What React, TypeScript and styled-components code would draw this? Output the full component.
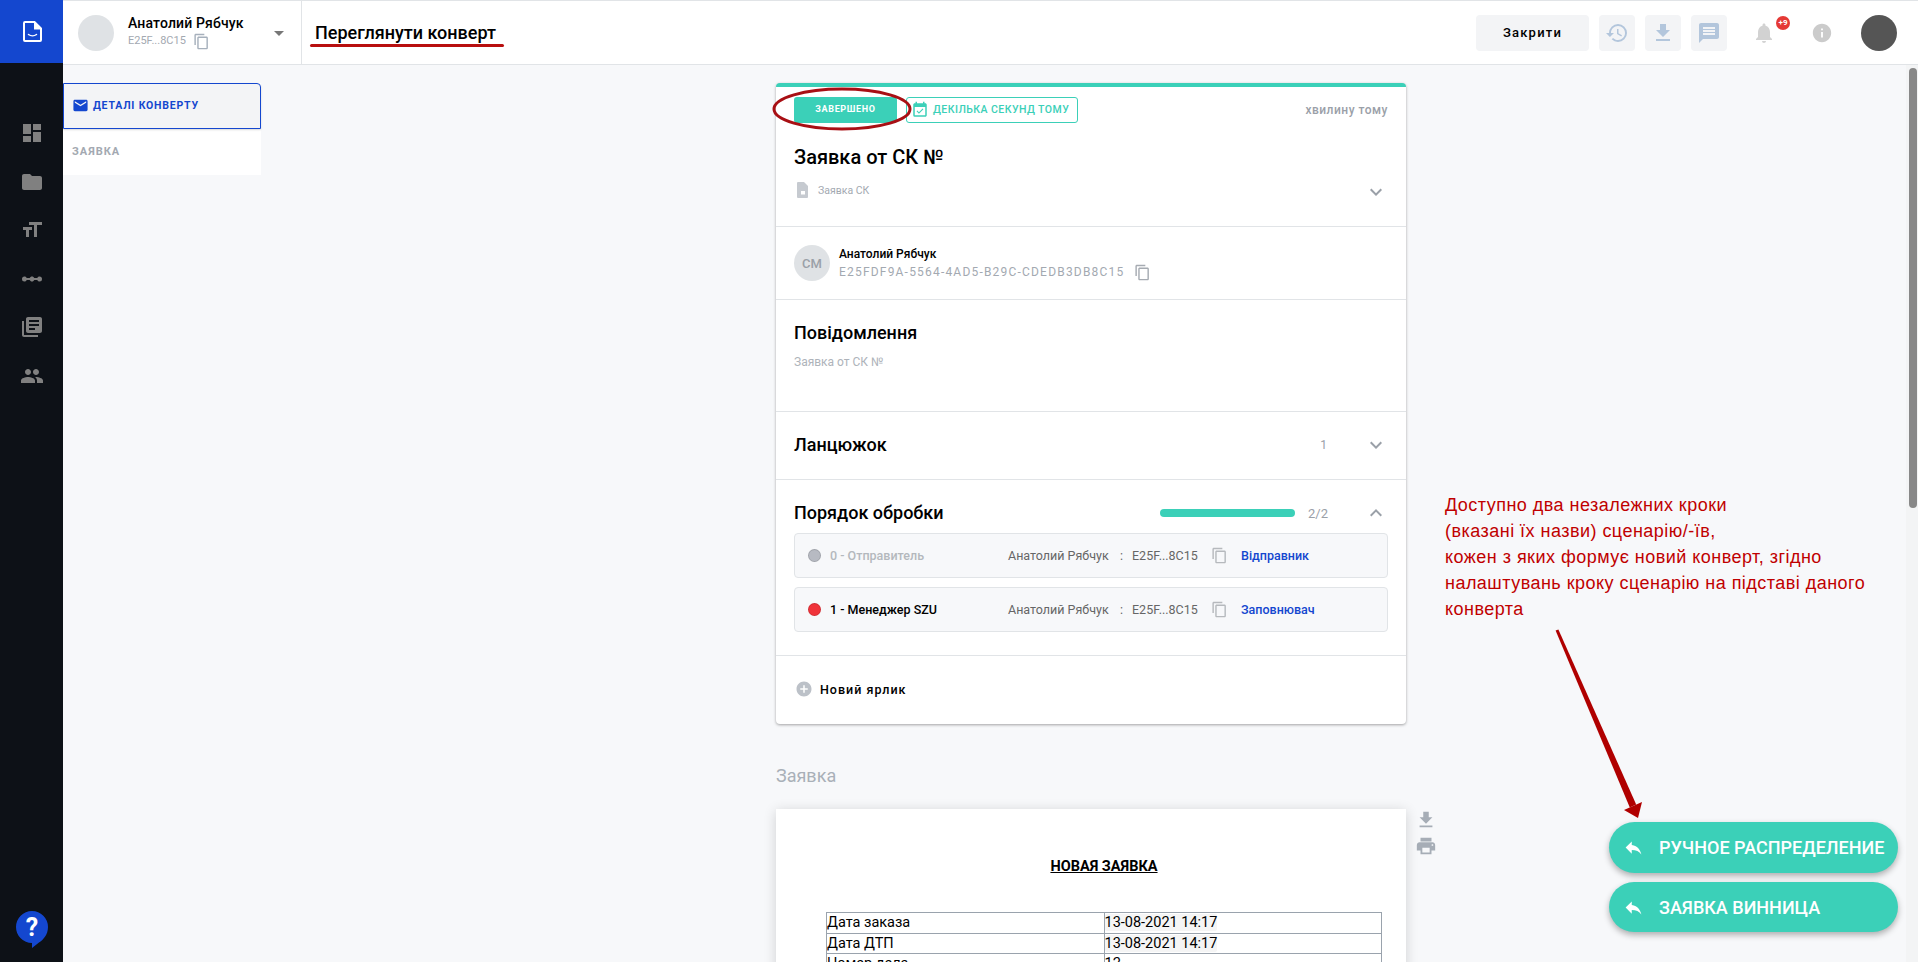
import React from "react";
import styled, { createGlobalStyle } from "styled-components";
import {
  MdDashboard, MdFolder, MdFormatSize, MdLinearScale, MdLibraryBooks, MdPeople, MdContentCopy,
  MdArrowDropDown, MdHistory, MdFileDownload, MdMessage, MdNotifications, MdInfo, MdEmail,
  MdEventAvailable, MdExpandMore, MdExpandLess, MdAddCircle, MdReply, MdPrint,
} from "react-icons/md";

const Global = createGlobalStyle`
  html, body { margin: 0; padding: 0; height: 100%; overflow: hidden; }
  body { font-family: Roboto, "Liberation Sans", sans-serif; background: #f7f8fa; color: #000; }
  * { box-sizing: border-box; }
`;

const Shell = styled.div`
  position: relative;
  display: flex;
  width: 100vw;
  height: 100vh;
  overflow: hidden;
`;

const Rail = styled.aside`
  flex: 0 0 63px;
  display: flex;
  flex-direction: column;
  align-items: center;
  background: #0d1117;
`;

const LogoBlock = styled.div`
  width: 63px;
  height: 63px;
  display: flex;
  align-items: center;
  justify-content: center;
  padding-left: 1px;
  background: #1447cf;
`;

const RailNav = styled.nav`
  display: flex;
  flex-direction: column;
  align-items: center;
  gap: 24.6px;
  margin-top: 58px;
  color: #808080;
  font-size: 24px;
  svg { display: block; }
`;

const HelpSlot = styled.div`
  margin-top: auto;
  margin-bottom: 12px;
  line-height: 0;
`;

const Column = styled.div`
  flex: 1;
  min-width: 0;
  display: flex;
  flex-direction: column;
`;

const TopBar = styled.header`
  flex: 0 0 65px;
  display: flex;
  align-items: center;
  background: #fff;
  border-top: 1px solid #e1e4e7;
  border-bottom: 1px solid #e1e4e7;
`;

const UserBox = styled.div`
  width: 239px;
  height: 100%;
  display: flex;
  align-items: center;
  padding-left: 15px;
  border-right: 1px solid #e1e4e7;
`;

const Avatar = styled.div<{ $bg: string }>`
  flex: none;
  width: 36px;
  height: 36px;
  border-radius: 50%;
  background: ${(p) => p.$bg};
  display: flex;
  align-items: center;
  justify-content: center;
  color: #9aa0a8;
  font-size: 13px;
  font-weight: 500;
`;

const UserInfo = styled.div`
  margin-left: 14px;
  width: 139px;
`;

const UserName = styled.div`
  font-size: 14px;
  font-weight: 500;
  letter-spacing: 0.15px;
  line-height: 18px;
  margin-top: -1px;
`;

const UserId = styled.div`
  display: flex;
  align-items: center;
  gap: 7px;
  font-size: 11px;
  line-height: 18px;
  color: #a3a9b1;
  svg { font-size: 17px; color: #a6b0bc; }
`;

const Caret = styled(MdArrowDropDown)`
  font-size: 24px;
  color: #777;
`;

const PageTitle = styled.h1`
  margin: 0 0 0 13px;
  font-size: 18px;
  font-weight: 500;
  flex: 1;
`;

const CloseButton = styled.button`
  width: 113px;
  height: 36px;
  border: 0;
  border-radius: 4px;
  background: #f3f4f6;
  font-family: inherit;
  font-size: 13px;
  font-weight: 500;
  letter-spacing: 1.2px;
  color: #000;
`;

const IconButton = styled.div`
  width: 36px;
  height: 36px;
  margin-left: 10px;
  border-radius: 4px;
  background: #f3f4f6;
  display: flex;
  align-items: center;
  justify-content: center;
  color: #b3c6dc;
  font-size: 24px;
`;

const Bell = styled.div`
  position: relative;
  margin-left: 24px;
  width: 26px;
  height: 26px;
  color: #d2d2d2;
  font-size: 24px;
  svg { display: block; margin: 1px; }
`;

const Badge = styled.span`
  position: absolute;
  left: 25px;
  top: -4px;
  width: 14px;
  height: 14px;
  border-radius: 50%;
  background: #e53935;
  color: #fff;
  font-size: 8px;
  font-weight: 700;
  line-height: 14px;
  text-align: center;
`;

const InfoIcon = styled(MdInfo)`
  margin-left: 34px;
  font-size: 22px;
  color: #cbcbcb;
`;

const RightAvatar = styled(Avatar)`
  margin-left: 28px;
  margin-right: 21px;
`;

const Body = styled.div`
  flex: 1;
  min-height: 0;
  display: flex;
`;

const Scroller = styled.div`
  flex: 1;
  min-width: 0;
  overflow: hidden;
  display: flex;
  align-items: flex-start;
  background: #f7f8fa;
`;

const ScrollTrack = styled.div`
  flex: 0 0 12px;
  padding: 3px 1px 0 3px;
  background: #f3f4f5;
`;

const ScrollThumb = styled.div`
  height: 440px;
  border-radius: 4px;
  background: #888;
`;

const TabList = styled.div`
  flex: 0 0 198px;
  margin-top: 18px;
  background: #fff;
`;

const ActiveTab = styled.div`
  height: 46px;
  display: flex;
  align-items: center;
  gap: 4px;
  padding: 0 0 2px 8px;
  background: #f3f4f6;
  border: 1px solid #1447cf;
  border-radius: 0 4px 0 0;
  box-shadow: 0 1px 2px rgba(0, 0, 0, 0.15);
  color: #1447cf;
  font-size: 10.5px;
  font-weight: 700;
  letter-spacing: 0.8px;
  svg { font-size: 17px; }
`;

const PlainTab = styled.div`
  height: 46px;
  display: flex;
  align-items: center;
  padding: 0 0 2px 9px;
  color: #a3a9b1;
  font-size: 11px;
  font-weight: 700;
  letter-spacing: 1px;
`;

const Center = styled.main`
  flex: 0 0 auto;
  margin-left: 515px;
  padding-top: 18px;
  padding-bottom: 40px;
`;

const Card = styled.section`
  width: 630px;
  background: #fff;
  border-top: 4px solid #3bd0b8;
  border-radius: 4px;
  box-shadow: 0 1px 3px rgba(0, 0, 0, 0.35);
`;

const Block = styled.div<{ $h: number }>`
  display: flow-root;
  height: ${(p) => p.$h}px;
  padding: 0 18px;
  border-bottom: 1px solid #e1e4e7;
  &:last-child { border-bottom: 0; }
`;

const StatusRow = styled.div`
  display: flex;
  align-items: center;
  padding-top: 10px;
  height: 36px;
`;

const StatusChip = styled.div`
  width: 103px;
  height: 26px;
  border-radius: 3px;
  background: #3bd0b8;
  color: #fff;
  font-size: 9px;
  font-weight: 700;
  letter-spacing: 0.65px;
  padding-bottom: 2px;
  display: flex;
  align-items: center;
  justify-content: center;
`;

const DateChip = styled.div`
  margin-left: 9px;
  height: 26px;
  width: 172px;
  border: 1px solid #3bd0b8;
  border-radius: 3px;
  color: #3bd0b8;
  font-size: 10.5px;
  font-weight: 500;
  letter-spacing: 0.45px;
  white-space: nowrap;
  display: flex;
  align-items: center;
  gap: 4px;
  padding: 0 0 1px 4px;
  svg { font-size: 18px; flex: none; }
`;

const Ago = styled.div`
  margin-left: auto;
  color: #9aa0a8;
  font-size: 12px;
  font-weight: 500;
  letter-spacing: 0.5px;
`;

const BigTitle = styled.h2<{ $mt?: number }>`
  margin: ${(p) => p.$mt ?? 0}px 0 0;
  font-size: 18px;
  font-weight: 500;
  line-height: 24px;
`;

const LargeTitle = styled(BigTitle)`
  font-size: 20px;
  margin-top: 22px;
  line-height: 24px;
`;

const SubRow = styled.div`
  display: flex;
  align-items: center;
  gap: 10px;
  margin-top: 11px;
  height: 20px;
  color: #a3a9b1;
  font-size: 10.5px;
`;

const FileIcon = styled.svg`
  margin-left: 3px;
`;

const Chevron = styled.span<{ $auto?: boolean }>`
  margin-left: ${(p) => (p.$auto ? "auto" : "0")};
  margin-top: ${(p) => (p.$auto ? "3px" : "0")};
  font-size: 24px;
  color: #9aa0a8;
  line-height: 0;
`;

const AuthorRow = styled.div`
  display: flex;
  align-items: center;
  height: 100%;
`;

const AuthorText = styled.div`
  margin-left: 9px;
`;

const AuthorName = styled.div`
  font-size: 12px;
  font-weight: 500;
  line-height: 18px;
`;

const AuthorId = styled.div`
  display: flex;
  align-items: center;
  gap: 10px;
  font-size: 12px;
  letter-spacing: 1.2px;
  line-height: 18px;
  color: #a3a9b1;
  svg { font-size: 17px; color: #a6abb2; }
`;

const MessageText = styled.div`
  margin-top: 8px;
  font-size: 12px;
  line-height: 18px;
  color: #aeb3ba;
`;

const HeadRow = styled.div<{ $h: number; $pt?: number }>`
  display: flex;
  align-items: center;
  height: ${(p) => p.$h}px;
  padding-top: ${(p) => p.$pt ?? 0}px;
`;

const Count = styled.span`
  margin-left: auto;
  color: #9aa0a8;
  font-size: 12px;
  margin-right: 37px;
`;

const Progress = styled.div`
  margin-left: auto;
  width: 135px;
  height: 8px;
  border-radius: 4px;
  background: #3bd0b8;
`;

const Fraction = styled.span`
  margin-left: 13px;
  margin-right: 36px;
  color: #9aa0a8;
  font-size: 13px;
`;

const StepBox = styled.div`
  display: grid;
  grid-template-columns: 200px 112px 12px 79px 30px 1fr;
  align-items: center;
  height: 45px;
  margin-bottom: 9px;
  padding-left: 13px;
  background: #f7f8fa;
  border: 1px solid #e1e4e7;
  border-radius: 4px;
  font-size: 12.5px;
  color: #666;
  svg { font-size: 17px; color: #b6b9bd; display: block; }
`;

const StepLabel = styled.div<{ $muted?: boolean }>`
  display: flex;
  align-items: center;
  gap: 9px;
  font-weight: 500;
  color: ${(p) => (p.$muted ? "#b4b8bd" : "#000")};
`;

const Dot = styled.span<{ $c: string }>`
  width: 13px;
  height: 13px;
  border-radius: 50%;
  background: ${(p) => p.$c};
  border: 1px solid rgba(0, 0, 0, 0.12);
`;

const Role = styled.div`
  color: #1447cf;
  font-weight: 500;
`;

const NewLabel = styled.div`
  display: flex;
  align-items: center;
  height: 100%;
  padding: 0 0 2px 1px;
  gap: 7px;
  font-size: 12.5px;
  font-weight: 500;
  letter-spacing: 1px;
  svg { font-size: 18px; color: #bcc1c8; }
`;

const SheetLabel = styled.div`
  margin-top: 41px;
  font-size: 18px;
  line-height: 22px;
  color: #a9b0b8;
`;

const SheetRow = styled.div`
  display: flex;
  margin-top: 22px;
`;

const Sheet = styled.article`
  width: 630px;
  min-height: 1000px;
  padding: 48px 24px 0 50px;
  background: #fff;
  box-shadow: 0 2px 12px rgba(0, 0, 0, 0.16);
  font-size: 14.5px;
`;

const SheetTitle = styled.div`
  text-align: center;
  font-size: 14.5px;
  font-weight: 700;
  text-decoration: underline;
  line-height: 20px;
  margin-bottom: 35px;
`;

const DocTable = styled.table`
  width: 556px;
  border-collapse: collapse;
  table-layout: fixed;
  td { border: 1px solid #9aa3ad; padding: 0; height: 20.6px; line-height: 19px; }
`;

const Stamp = styled.span`
  background: #f5f5f5;
  border-radius: 2px;
`;

const SheetActions = styled.div`
  display: flex;
  flex-direction: column;
  gap: 4px;
  margin-left: 9px;
  font-size: 22px;
  color: #a6adb6;
  svg { display: block; }
`;

const FabStack = styled.div`
  position: absolute;
  right: 20px;
  top: 822px;
  display: flex;
  flex-direction: column;
  gap: 9px;
`;

const Fab = styled.button<{ $h: number }>`
  width: 289px;
  height: ${(p) => p.$h}px;
  border: 0;
  border-radius: 26px;
  background: #3bd0b8;
  box-shadow: 0 3px 6px rgba(0, 0, 0, 0.3);
  color: #fff;
  font-family: inherit;
  font-size: 18px;
  font-weight: 500;
  display: flex;
  align-items: center;
  padding: 0 0 0 14px;
  gap: 15px;
  svg { font-size: 21px; flex: none; }
`;

const Note = styled.div`
  position: absolute;
  left: 1445px;
  top: 492px;
  width: 460px;
  color: #c00000;
  font-family: "Liberation Sans", Arial, sans-serif;
  font-size: 18px;
  letter-spacing: 0.47px;
  line-height: 26px;
  white-space: pre-line;
`;

const Overlay = styled.svg`
  position: absolute;
  inset: 0;
  pointer-events: none;
`;

const Help = () => (
  <svg width="34" height="40" viewBox="0 0 34 40">
    <path d="M17 1a16 16 0 0 1 16 16c0 8-5 13-9 15.5L17 38V33A16 16 0 0 1 17 1z" fill="#1447cf" />
    <text x="17" y="26" textAnchor="middle" fontFamily="Roboto, sans-serif" fontSize="25" fontWeight="700" fill="#fff">?</text>
  </svg>
);

const Logo = () => (
  <svg width="19" height="21" viewBox="0 0 19 21" fill="none">
    <path d="M2 1h9.5L18 7.5V19a1 1 0 0 1-1 1H2a1 1 0 0 1-1-1V2a1 1 0 0 1 1-1z" stroke="#fff" strokeWidth="2" />
    <path d="M11 1h1l6 6v1.5h-7z" fill="#fff" />
    <path d="M5.5 13.5c2.2 1.7 5.8 1.7 8 0" stroke="#fff" strokeWidth="1.5" strokeLinecap="round" />
  </svg>
);

const DocGlyph = () => (
  <FileIcon width="11" height="16" viewBox="0 0 11 16">
    <path d="M1 0h6l4 4v11a1 1 0 0 1-1 1H1a1 1 0 0 1-1-1V1a1 1 0 0 1 1-1z" fill="#c6cad0" />
    <path d="M4 9h4v3.5H4z" fill="#fff" />
  </FileIcon>
);

const steps = [
  { n: "0 - Отправитель", c: "#b7bac2", muted: true, role: "Відправник" },
  { n: "1 - Менеджер SZU", c: "#f0333a", muted: false, role: "Заповнювач" },
];

export default function App() {
  return (
    <Shell>
      <Global />
      <Rail>
        <LogoBlock><Logo /></LogoBlock>
        <RailNav>
          <MdDashboard /><MdFolder /><MdFormatSize /><MdLinearScale /><MdLibraryBooks /><MdPeople />
        </RailNav>
        <HelpSlot><Help /></HelpSlot>
      </Rail>
      <Column>
        <TopBar>
          <UserBox>
            <Avatar $bg="#dfe2e5" />
            <UserInfo>
              <UserName>Анатолий Рябчук</UserName>
              <UserId>E25F...8C15 <MdContentCopy /></UserId>
            </UserInfo>
            <Caret />
          </UserBox>
          <PageTitle>Переглянути конверт</PageTitle>
          <CloseButton>Закрити</CloseButton>
          <IconButton><MdHistory /></IconButton>
          <IconButton><MdFileDownload /></IconButton>
          <IconButton><MdMessage /></IconButton>
          <Bell><MdNotifications /><Badge>+9</Badge></Bell>
          <InfoIcon />
          <RightAvatar $bg="#555" />
        </TopBar>
        <Body>
          <Scroller>
            <TabList>
              <ActiveTab><MdEmail />ДЕТАЛІ КОНВЕРТУ</ActiveTab>
              <PlainTab>ЗАЯВКА</PlainTab>
            </TabList>
            <Center>
              <Card>
                <Block $h={140}>
                  <StatusRow>
                    <StatusChip>ЗАВЕРШЕНО</StatusChip>
                    <DateChip><MdEventAvailable />ДЕКІЛЬКА СЕКУНД ТОМУ</DateChip>
                    <Ago>хвилину тому</Ago>
                  </StatusRow>
                  <LargeTitle>Заявка от СК №</LargeTitle>
                  <SubRow>
                    <DocGlyph />Заявка СК
                    <Chevron $auto><MdExpandMore /></Chevron>
                  </SubRow>
                </Block>
                <Block $h={73}>
                  <AuthorRow>
                    <Avatar $bg="#dfe2e5">СМ</Avatar>
                    <AuthorText>
                      <AuthorName>Анатолий Рябчук</AuthorName>
                      <AuthorId>E25FDF9A-5564-4AD5-B29C-CDEDB3DB8C15 <MdContentCopy /></AuthorId>
                    </AuthorText>
                  </AuthorRow>
                </Block>
                <Block $h={112}>
                  <BigTitle $mt={21}>Повідомлення</BigTitle>
                  <MessageText>Заявка от СК №</MessageText>
                </Block>
                <Block $h={68}>
                  <HeadRow $h={66}>
                    <BigTitle>Ланцюжок</BigTitle>
                    <Count>1</Count>
                    <Chevron><MdExpandMore /></Chevron>
                  </HeadRow>
                </Block>
                <Block $h={176}>
                  <HeadRow $h={53} $pt={13}>
                    <BigTitle>Порядок обробки</BigTitle>
                    <Progress />
                    <Fraction>2/2</Fraction>
                    <Chevron><MdExpandLess /></Chevron>
                  </HeadRow>
                  {steps.map((s) => (
                    <StepBox key={s.n}>
                      <StepLabel $muted={s.muted}><Dot $c={s.c} />{s.n}</StepLabel>
                      <span>Анатолий Рябчук</span>
                      <span>:</span>
                      <span>E25F...8C15</span>
                      <MdContentCopy />
                      <Role>{s.role}</Role>
                    </StepBox>
                  ))}
                </Block>
                <Block $h={68}>
                  <NewLabel><MdAddCircle />Новий ярлик</NewLabel>
                </Block>
              </Card>
              <SheetLabel>Заявка</SheetLabel>
              <SheetRow>
                <Sheet>
                  <SheetTitle>НОВАЯ ЗАЯВКА</SheetTitle>
                  <DocTable>
                    <tbody>
                      <tr><td>Дата заказа</td><td><Stamp>13-08-2021 14:17</Stamp></td></tr>
                      <tr><td>Дата ДТП</td><td><Stamp>13-08-2021 14:17</Stamp></td></tr>
                      <tr><td>Номер дела</td><td>12</td></tr>
                    </tbody>
                  </DocTable>
                </Sheet>
                <SheetActions><MdFileDownload /><MdPrint /></SheetActions>
              </SheetRow>
            </Center>
          </Scroller>
          <ScrollTrack><ScrollThumb /></ScrollTrack>
        </Body>
      </Column>
      <Note>{`Доступно два незалежних кроки
(вказані їх назви) сценарію/-їв,
кожен з яких формує новий конверт, згідно
налаштувань кроку сценарію на підставі даного
конверта`}</Note>
      <Overlay width="1918" height="962" viewBox="0 0 1918 962">
        <path d="M311.5 45.5H502.5" stroke="#b80f0f" strokeWidth="3" strokeLinecap="round" />
        <ellipse cx="842" cy="109" rx="68" ry="20" fill="none" stroke="#a80f14" strokeWidth="3" />
        <path d="M1555.6 630.6L1558.4 629.4L1636.2 804.6L1629.8 807.4Z" fill="#b00000" />
        <path d="M1638 818L1624 810L1642 802Z" fill="#b00000" />
      </Overlay>
      <FabStack>
        <Fab $h={51}><MdReply />РУЧНОЕ РАСПРЕДЕЛЕНИЕ</Fab>
        <Fab $h={50}><MdReply />ЗАЯВКА ВИННИЦА</Fab>
      </FabStack>
    </Shell>
  );
}
